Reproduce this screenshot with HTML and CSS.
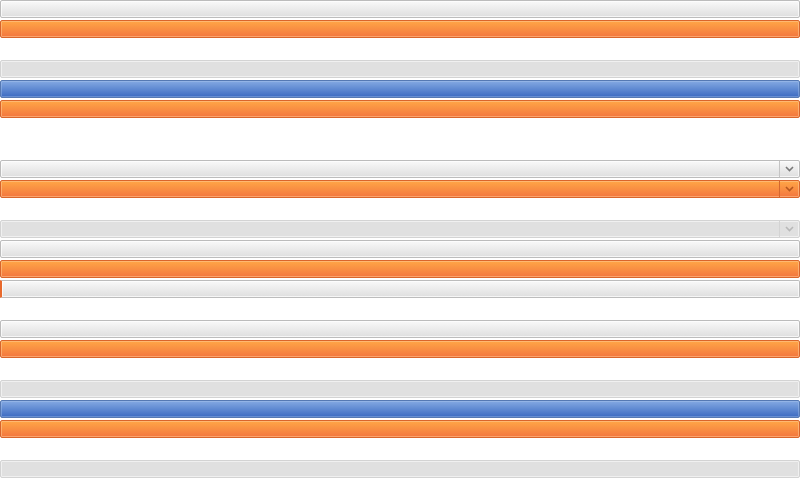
FILE: index.html
```html
<!DOCTYPE html>
<html>
<head>
    <title>Widget states</title>
    <link rel="stylesheet" href="styles.css">
</head>
<body>
    <div class="stack">
        <div class="group skip-1">
            <div class="bar normal"></div>
            <div class="bar active"></div>
        </div>
        <div class="group skip-2">
            <div class="bar disabled"></div>
            <div class="bar selected"></div>
            <div class="bar active"></div>
        </div>
        <div class="group skip-1">
            <div class="bar normal combo">
                <span class="arrow"><svg width="9" height="6" viewBox="0 0 9 6"><path d="M1 1 L4.5 4.5 L8 1" fill="none" stroke="#7a7a7a" stroke-width="1.6"/></svg></span>
            </div>
            <div class="bar active combo">
                <span class="arrow"><svg width="9" height="6" viewBox="0 0 9 6"><path d="M1 1 L4.5 4.5 L8 1" fill="none" stroke="#b5571f" stroke-width="1.6"/></svg></span>
            </div>
        </div>
        <div class="group skip-1">
            <div class="bar disabled combo">
                <span class="arrow"><svg width="9" height="6" viewBox="0 0 9 6"><path d="M1 1 L4.5 4.5 L8 1" fill="none" stroke="#b8b8b8" stroke-width="1.6"/></svg></span>
            </div>
            <div class="bar normal"></div>
            <div class="bar active"></div>
            <div class="bar normal focus"></div>
        </div>
        <div class="group skip-1">
            <div class="bar normal"></div>
            <div class="bar active"></div>
        </div>
        <div class="group skip-1">
            <div class="bar disabled"></div>
            <div class="bar selected"></div>
            <div class="bar active"></div>
        </div>
        <div class="group">
            <div class="bar disabled"></div>
        </div>
    </div>
</body>
</html>
```

FILE: styles.css
```css
body {
    margin: 0;
    background: #ffffff;
    font-family: "Liberation Sans", Arial, sans-serif;
}

.stack {
    display: flex;
    flex-direction: column;
    width: 800px;
}

.group {
    display: flex;
    flex-direction: column;
    gap: 2px;
}

/* one empty 20px slot after the group, plus the 2px row gap */
.skip-1 {
    margin-bottom: 22px;
}

.skip-2 {
    margin-bottom: 42px;
}

.bar {
    box-sizing: border-box;
    height: 18px;
    border: 1px solid #bcbcbc;
    border-radius: 2px;
    display: flex;
    justify-content: flex-end;
}

.normal {
    background: linear-gradient(#f9f9f9, #dedede);
    box-shadow: inset 0 0 0 1px rgba(255, 255, 255, 0.7);
}

.active {
    border-color: #d9652b;
    background: linear-gradient(#ffa646, #f3773f);
    box-shadow: inset 0 0 0 1px rgba(255, 200, 150, 0.55);
}

.selected {
    border-color: #5579b3;
    background: linear-gradient(#84a9e2, #3b6bc2);
    box-shadow: inset 0 0 0 1px rgba(180, 205, 240, 0.35);
}

.disabled {
    border-color: #d3d3d3;
    background: #e0e0e0;
    box-shadow: inset 0 0 0 1px #f0f0f0;
}

.focus {
    border-left: 2px solid #e8692c;
    border-radius: 0 2px 2px 0;
}

.arrow {
    width: 19px;
    display: flex;
    align-items: center;
    justify-content: center;
    border-left: 1px solid #c4c4c4;
}

.active .arrow {
    border-left-color: #d3672f;
}

.disabled .arrow {
    border-left-color: #d3d3d3;
}
```
